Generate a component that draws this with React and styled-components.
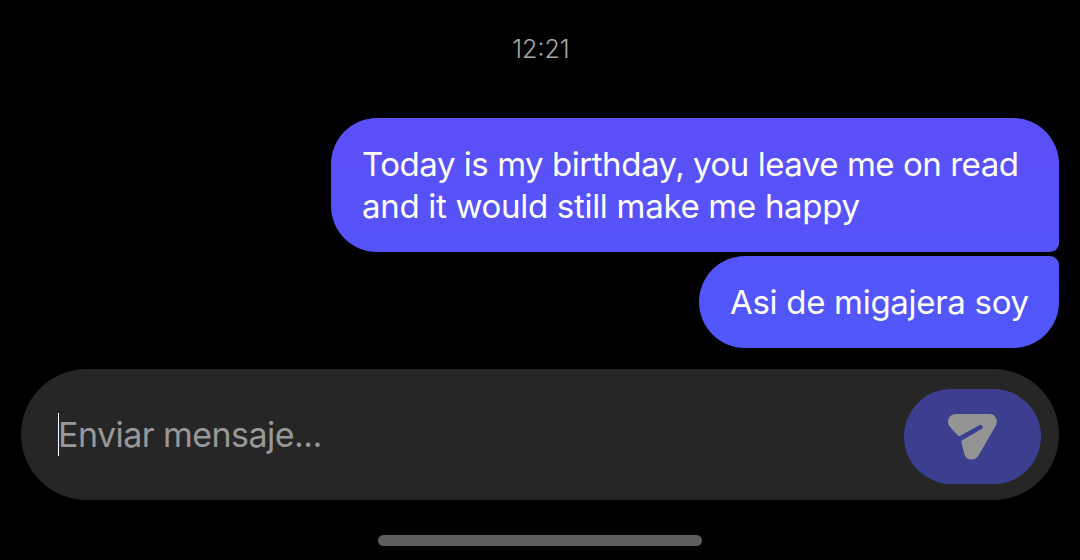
import styled, { createGlobalStyle } from 'styled-components';

const GlobalStyle = createGlobalStyle`
  * {
    box-sizing: border-box;
  }
  body {
    margin: 0;
    background: #000;
    font-family: Inter, Roboto, "Liberation Sans", sans-serif;
  }
`;

const Screen = styled.div`
  width: 1080px;
  height: 560px;
  padding: 0 21px;
  background: #000;
  display: flex;
  flex-direction: column;
  overflow: hidden;
`;

const Time = styled.div`
  margin: 34px 0 54px 2px;
  text-align: center;
  color: #a8a8a8;
  font-size: 25px;
  font-weight: 300;
  line-height: 30px;
`;

const Messages = styled.div`
  display: flex;
  flex-direction: column;
  align-items: flex-end;
  gap: 4px;
`;

const Bubble = styled.div`
  width: ${props => props.$width}px;
  padding: 25px 0 25px 31px;
  border-radius: ${props => (props.$last ? '46px 9px 46px 46px' : '46px 46px 9px 46px')};
  background: ${props => (props.$last
    ? 'linear-gradient(#5454f9, #5058fa)'
    : 'linear-gradient(#5b4ff8, #5553f9)')};
`;

const Line = styled.div`
  color: #fff;
  font-size: 33px;
  line-height: 42px;
  white-space: nowrap;
  letter-spacing: ${props => props.$spacing}px;
`;

const Composer = styled.div`
  height: 131px;
  margin-top: 21px;
  padding: 0 18px 0 37px;
  border-radius: 66px;
  background: #262626;
  display: flex;
  align-items: center;
  justify-content: space-between;
`;

const Field = styled.div`
  display: flex;
  align-items: center;
`;

const Caret = styled.span`
  width: 1px;
  height: 43px;
  margin-right: -1px;
  background: #fff;
`;

const Placeholder = styled.span`
  color: #989898;
  font-size: 34px;
  line-height: 42px;
  letter-spacing: -0.55px;
`;

const SendButton = styled.button`
  width: 137px;
  height: 95px;
  margin-top: 4px;
  padding: 0;
  border: 0;
  border-radius: 48px;
  background: #3c3f90;
  display: flex;
  align-items: center;
  justify-content: center;
`;

const HomeBar = styled.div`
  width: 324px;
  height: 11px;
  margin: 35px auto 0;
  border-radius: 6px;
  background: #5e5e5e;
`;

const messages = [
  {
    width: 728,
    lines: [
      { text: 'Today is my birthday, you leave me on read', spacing: -0.46 },
      { text: 'and it would still make me happy', spacing: -0.3 },
    ],
  },
  {
    width: 360,
    lines: [{ text: 'Asi de migajera soy', spacing: -0.3 }],
  },
];

function SendIcon() {
  return (
    <svg width="49" height="46" viewBox="0 0 49 46" fill="#949494">
      <path d="M7.5 0H41.5C47.5 0 50.7 6.5 47.7 11.7L30.5 41.5C26.8 47.8 17.7 46.5 16.2 39.5L13.5 28.7Q13.1 27 14.6 26.1L33.4 15.1A2.2 2.2 0 0 0 31.2 11.2L12.4 21.8Q11 22.6 9.8 21.4L2.3 13.2C-2.4 8.2.8 0 7.5 0Z" />
    </svg>
  );
}

function App() {
  return (
    <Screen>
      <GlobalStyle />
      <Time>12:21</Time>
      <Messages>
        {messages.map((message, i) => (
          <Bubble key={i} $width={message.width} $last={i === messages.length - 1}>
            {message.lines.map(line => (
              <Line key={line.text} $spacing={line.spacing}>{line.text}</Line>
            ))}
          </Bubble>
        ))}
      </Messages>
      <Composer>
        <Field>
          <Caret />
          <Placeholder>Enviar mensaje...</Placeholder>
        </Field>
        <SendButton aria-label="Enviar">
          <SendIcon />
        </SendButton>
      </Composer>
      <HomeBar />
    </Screen>
  );
}

export default App;
